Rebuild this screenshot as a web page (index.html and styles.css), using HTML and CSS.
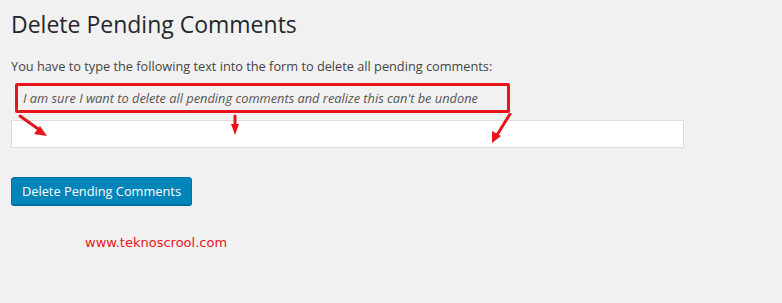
FILE: index.html
```html
<!DOCTYPE html>
<html>
<head>
<meta charset="utf-8">
<link rel="stylesheet" href="styles.css">
</head>
<body>
<div class="wrap">
  <h1 class="title">Delete Pending Comments</h1>
  <p class="intro">You have to type the following text into the form to delete all pending comments:</p>
  <div class="confirm">
    <div class="phrase-box"><em>I am sure I want to delete all pending comments and realize this can't be undone</em></div>
    <input class="field" type="text">
    <svg class="arrows" width="520" height="40" viewBox="0 0 520 40">
      <g stroke="#e8141b" stroke-width="3" fill="none" stroke-linecap="round">
        <line x1="5" y1="3" x2="26" y2="18"/>
        <line x1="220" y1="3" x2="220" y2="12"/>
        <line x1="495" y1="1" x2="482" y2="22"/>
      </g>
      <g fill="#e8141b">
        <polygon points="32,23 19,21 25,13"/>
        <polygon points="220,22 216,11 224,11"/>
        <polygon points="477,30 477,18 486,23"/>
      </g>
    </svg>
  </div>
  <button class="btn" type="button">Delete Pending Comments</button>
  <div class="site">www.teknoscrool.com</div>
</div>
</body>
</html>
```
FILE: styles.css
```css
html, body {
  margin: 0;
  padding: 0;
  background: #f1f1f1;
}
body {
  font-family: "Open Sans", "Noto Sans", sans-serif;
  color: #444;
}
.wrap {
  padding: 8px 10px 0 11px;
}
.title {
  margin: 0;
  font-size: 23px;
  font-weight: 400;
  line-height: 32px;
  color: #23282d;
}
.intro {
  margin: 18px 0 0 0;
  font-size: 12.75px;
  line-height: 16px;
  color: #444;
}
.confirm {
  position: relative;
  margin-top: 9px;
}
.phrase-box {
  margin-left: 4px;
  width: 484px;
  height: 24px;
  border: 3px solid #e8141b;
  border-radius: 2px;
  display: flex;
  align-items: center;
  padding-left: 5px;
  box-sizing: content-box;
}
.phrase-box em {
  font-size: 12.8px;
  color: #555;
  font-style: italic;
}
.field {
  display: block;
  margin: 7px 0 0 0;
  width: 673px;
  height: 28px;
  box-sizing: border-box;
  border: 1px solid #ddd;
  background: #fff;
  padding: 0;
}
.arrows {
  position: absolute;
  left: 4px;
  top: 30px;
}
.btn {
  display: block;
  margin-top: 29px;
  width: 181px;
  height: 28px;
  background: #0085ba;
  border: 1px solid #0073aa;
  border-radius: 3px;
  color: #fff;
  font-family: "Open Sans", "Noto Sans", sans-serif;
  font-size: 12.8px;
  padding: 0;
  box-shadow: 0 1px 0 #006799;
}
.site {
  margin: 30px 0 0 74px;
  font-family: "DejaVu Sans", sans-serif;
  font-size: 13px;
  color: #e8141b;
}
```
